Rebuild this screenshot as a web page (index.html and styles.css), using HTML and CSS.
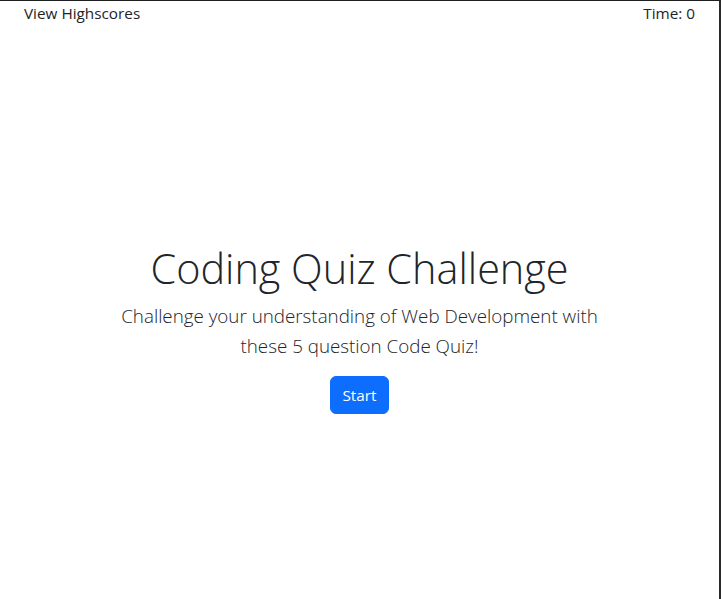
FILE: index.html
```html
<!DOCTYPE html>
<html lang="en">
<head>
<meta charset="utf-8">
<title>Coding Quiz</title>
<link rel="stylesheet" href="styles.css">
</head>
<body>
<div class="page">
  <header class="topbar">
    <a class="scores" href="#">View Highscores</a>
    <span class="timer">Time: 0</span>
  </header>
  <main class="intro">
    <h1 class="title">Coding Quiz Challenge</h1>
    <p class="lead">Challenge your understanding of Web Development with<br>these 5 question Code Quiz!</p>
    <button class="btn-start" type="button">Start</button>
  </main>
</div>
</body>
</html>
```

FILE: styles.css
```css
* { box-sizing: border-box; }
html, body { margin: 0; padding: 0; height: 100%; }
body {
  font-family: "Open Sans", "Noto Sans", sans-serif;
  font-size: 15.3px;
  line-height: 24px;
  color: #212529;
  background: #fff;
}
.page {
  height: 100%;
  border-top: 1px solid #1e1e1e;
  border-right: 2px solid #2a2a2a;
  display: flex;
  flex-direction: column;
}
.topbar {
  display: flex;
  justify-content: space-between;
  padding: 0 24px;
  height: 24px;
}
.scores { color: #212529; text-decoration: none; }
.timer { color: #212529; }
.intro {
  text-align: center;
  padding-top: 217px;
}
.title {
  margin: 0 0 7px;
  font-size: 41.4px;
  font-weight: 300;
  line-height: 52px;
}
.lead {
  margin: 0 0 15px;
  font-size: 18.8px;
  font-weight: 300;
  line-height: 30px;
}
.btn-start {
  font-family: inherit;
  font-size: 15.3px;
  line-height: 24px;
  color: #fff;
  background: #0d6efd;
  border: 1px solid #0d6efd;
  border-radius: 6px;
  padding: 6px 11.5px;
  cursor: pointer;
}
```
